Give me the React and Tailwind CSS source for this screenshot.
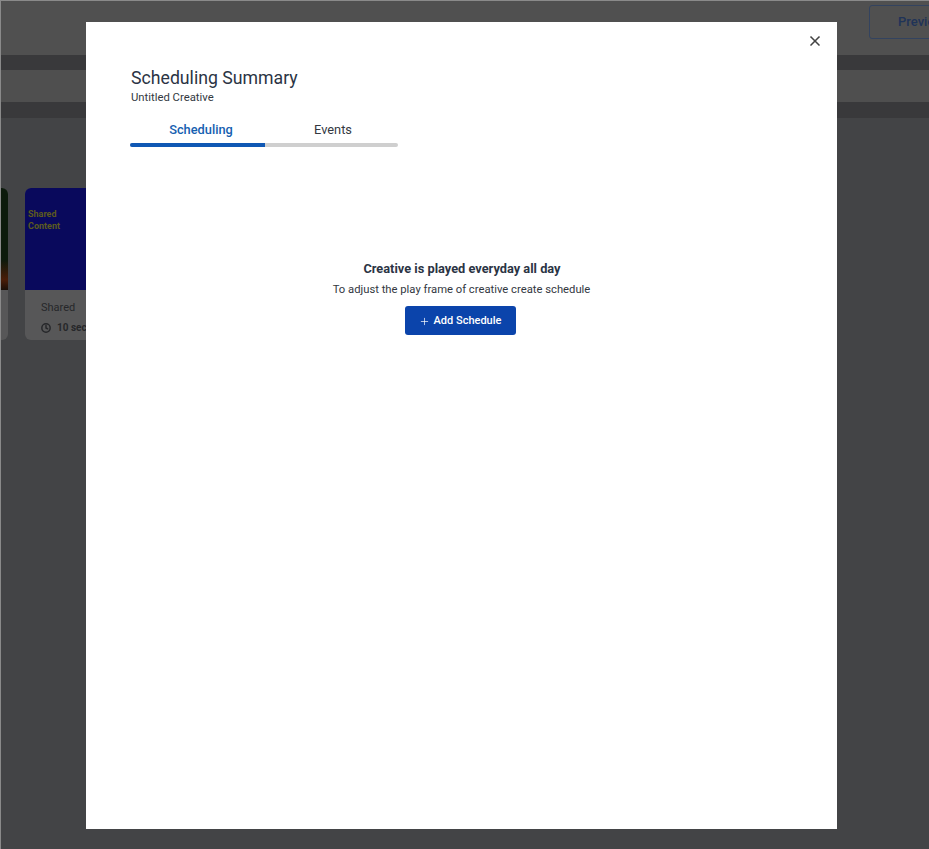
import { X, Plus, Clock } from 'lucide-react';

const font = { fontFamily: '"Roboto", "Liberation Sans", sans-serif' };

const App = () => {
  return (
    <div style={font} className="relative w-[929px] h-[849px] overflow-hidden bg-[#434446] border-l border-t border-[#8a8a8a]">
      {/* page behind the overlay */}
      <div className="h-[54px] bg-[#505050] flex justify-end pt-[4px]">
        <div className="w-[80px] h-[34px] ml-auto -mr-[20px] rounded-[3px] border border-[#33435f] flex items-center pl-[28px] overflow-hidden">
          <span className="text-[13px] font-medium text-[#1f3358]">Preview</span>
        </div>
      </div>
      <div className="h-[15px] bg-[#39393b]" />
      <div className="h-[32px] bg-[#4f4f4f]" />
      <div className="h-[16px] bg-[#39393b]" />
      <div className="flex gap-[17px] pt-[70px] -ml-[170px]">
        <div className="w-[177px] h-[152px] rounded-[6px] bg-[#575758] overflow-hidden">
          <div className="h-[102px] bg-[linear-gradient(180deg,#0c1a0c_0%,#0c1a0c_70%,#4a1d08_90%,#1a0f08_100%)]" />
        </div>
        <div className="w-[177px] h-[152px] rounded-[6px] bg-[#575758] overflow-hidden">
          <div className="h-[102px] bg-[#09095c] px-[3px] pt-[20px] text-[9px] leading-[12px] font-bold text-[#5c5a1e]">
            Shared<br />Content
          </div>
          <div className="pl-[16px] pt-[11px]">
            <p className="text-[11px] leading-[14px] text-[#26272a]">Shared</p>
            <div className="flex items-center gap-[6px] mt-[5px] text-[#26272a]">
              <Clock size={10} strokeWidth={3.5} />
              <span className="text-[10px] font-bold whitespace-nowrap">10 sec</span>
            </div>
          </div>
        </div>
      </div>

      {/* modal */}
      <div className="absolute left-[85px] top-[21px] w-[751px] h-[807px] bg-white pl-[44px] pt-[45px]">
        <button className="absolute top-[11px] right-[14px] text-[#444444]">
          <X size={16} strokeWidth={2.5} />
        </button>
        <div className="pl-[1px]">
          <h2 className="text-[17.7px] leading-[22px] text-[#2b3444]">Scheduling Summary</h2>
          <p className="text-[11.3px] leading-[14px] mt-[2px] text-[#33383f]">Untitled Creative</p>
        </div>
        <div className="w-[268px] mt-[17px]">
          <div className="flex text-[12.8px] leading-[16px]">
            <div className="w-[135px] text-center font-medium text-[#1560b0] pl-[7px]">Scheduling</div>
            <div className="flex-1 text-center text-[#33383f] pl-[3px]">Events</div>
          </div>
          <div className="flex h-[4px] mt-[5px] rounded-full overflow-hidden bg-[#cfcfcf]">
            <div className="w-[135px] bg-[#1058b4]" />
          </div>
        </div>
        <div className="flex flex-col items-center mt-[114px] w-[663px]">
          <p className="text-[12.8px] leading-[16px] font-bold text-[#2b3444] ml-[1px]">Creative is played everyday all day</p>
          <p className="text-[11.25px] leading-[14px] mt-[6px] text-[#33383f]">To adjust the play frame of creative create schedule</p>
          <button className="flex items-center justify-center gap-[4px] w-[111px] h-[29px] mt-[9px] -ml-[3px] pt-[1px] rounded-[3px] bg-[#0b44ab] text-white">
            <Plus size={11} strokeWidth={1.5} />
            <span className="text-[11px] font-medium">Add Schedule</span>
          </button>
        </div>
      </div>
    </div>
  );
};

export default App;
